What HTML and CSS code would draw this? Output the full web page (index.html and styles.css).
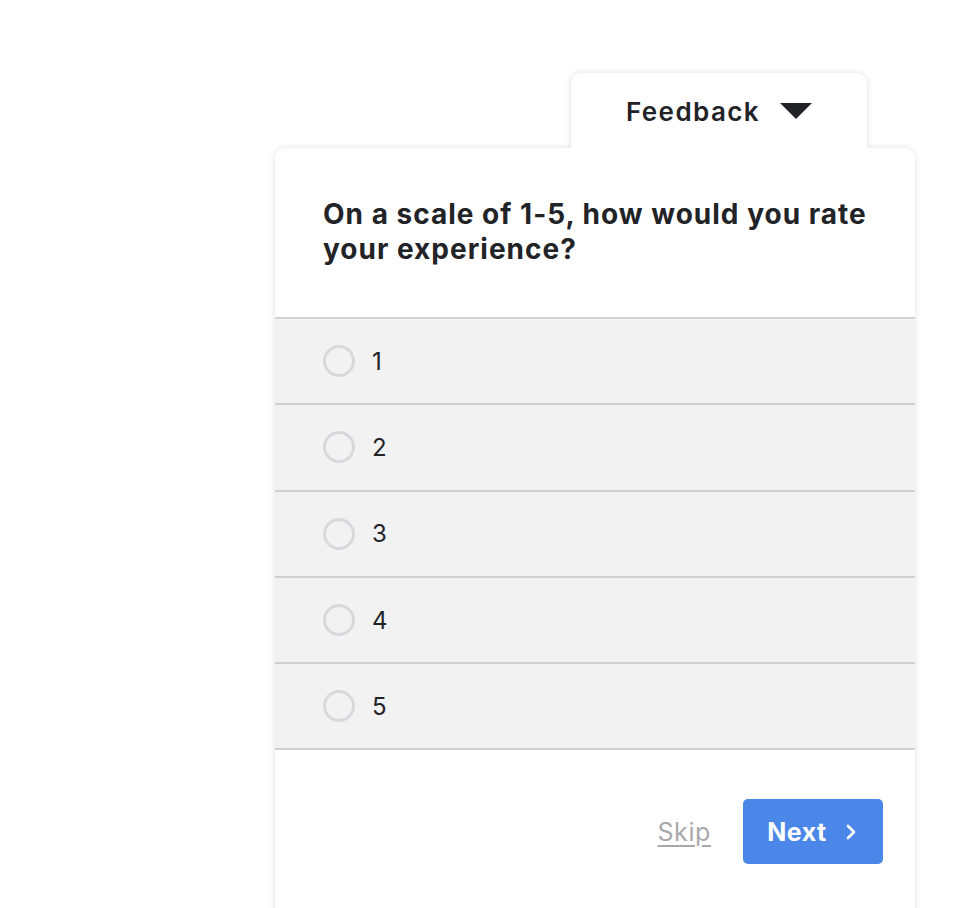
FILE: index.html
```html
<!DOCTYPE html>
<html>
<head>
<meta charset="utf-8">
<link rel="stylesheet" href="styles.css">
</head>
<body>
<div class="widget">
  <div class="tab">
    <span class="tab-label">Feedback</span>
    <span class="caret"></span>
  </div>
  <div class="card">
    <div class="question">On a scale of 1-5, how would you rate your experience?</div>
    <div class="options">
      <div class="option"><span class="radio"></span><span class="opt-label">1</span></div>
      <div class="option"><span class="radio"></span><span class="opt-label">2</span></div>
      <div class="option"><span class="radio"></span><span class="opt-label">3</span></div>
      <div class="option"><span class="radio"></span><span class="opt-label">4</span></div>
      <div class="option"><span class="radio"></span><span class="opt-label">5</span></div>
    </div>
    <div class="footer">
      <a class="skip" href="#">Skip</a>
      <button class="next">Next <svg class="chev" width="12" height="16" viewBox="0 0 12 16"><path d="M3 2 L9 8 L3 14" fill="none" stroke="#fff" stroke-width="2.6" stroke-linecap="round" stroke-linejoin="round"/></svg></button>
    </div>
  </div>
</div>
</body>
</html>
```
FILE: styles.css
```css
html, body {
  margin: 0;
  padding: 0;
  background: #fff;
  overflow: hidden;
}
body {
  font-family: Inter, "Liberation Sans", sans-serif;
  color: #222327;
}
.widget {
  padding: 73px 0 0 275px;
  width: 640px;
  display: flex;
  flex-direction: column;
}
.tab {
  margin-left: 296px;
  width: 296px;
  height: 75px;
  box-sizing: border-box;
  background: #fff;
  border-radius: 10px 10px 0 0;
  box-shadow: 0 0 6px rgba(0,0,0,0.13);
  clip-path: inset(-12px -12px 0 -12px);
  display: flex;
  align-items: center;
  justify-content: center;
  gap: 20px;
  padding: 2px 0 0 0;
  position: relative;
  z-index: 2;
}
.tab-label {
  font-size: 26px;
  font-weight: 600;
  letter-spacing: 1.4px;
  line-height: 30px;
}
.caret {
  width: 0;
  height: 0;
  border-left: 16px solid transparent;
  border-right: 16px solid transparent;
  border-top: 16px solid #222327;
  margin-top: -1px;
}
.card {
  background: #fff;
  border-radius: 10px 10px 0 0;
  box-shadow: 0 0 6px rgba(0,0,0,0.13);
  height: 800px;
  position: relative;
  z-index: 1;
}
.question {
  padding: 49px 48px 50px 48px;
  font-size: 28px;
  line-height: 35px;
  font-weight: 700;
  letter-spacing: 1.0px;
  border-bottom: 2px solid #d3d3d6;
}
.option {
  height: 84.3px;
  background: #f2f2f2;
  border-bottom: 2px solid #d0d0d2;
  display: flex;
  align-items: center;
  padding-left: 48px;
  gap: 17px;
}
.radio {
  width: 26px;
  height: 26px;
  border: 3px solid #d8d8da;
  border-radius: 50%;
  background: #f2f2f2;
}
.opt-label {
  font-size: 24px;
  letter-spacing: 0.5px;
  color: #222327;
}
.footer {
  display: flex;
  justify-content: flex-end;
  align-items: center;
  padding: 49px 32px 0 0;
  gap: 32px;
}
.skip {
  font-size: 25px;
  letter-spacing: 0.6px;
  color: #a9a9ab;
  text-decoration: underline;
  text-underline-offset: 4px;
}
.next {
  width: 140px;
  height: 65px;
  background: #4a87e8;
  border: none;
  border-radius: 5px;
  color: #fff;
  font-family: Inter, "Liberation Sans", sans-serif;
  font-size: 25px;
  font-weight: 700;
  letter-spacing: 0.5px;
  display: flex;
  align-items: center;
  justify-content: center;
  gap: 18px;
  padding: 0 2px 0 0;
}
.chev { display: block; }
```
